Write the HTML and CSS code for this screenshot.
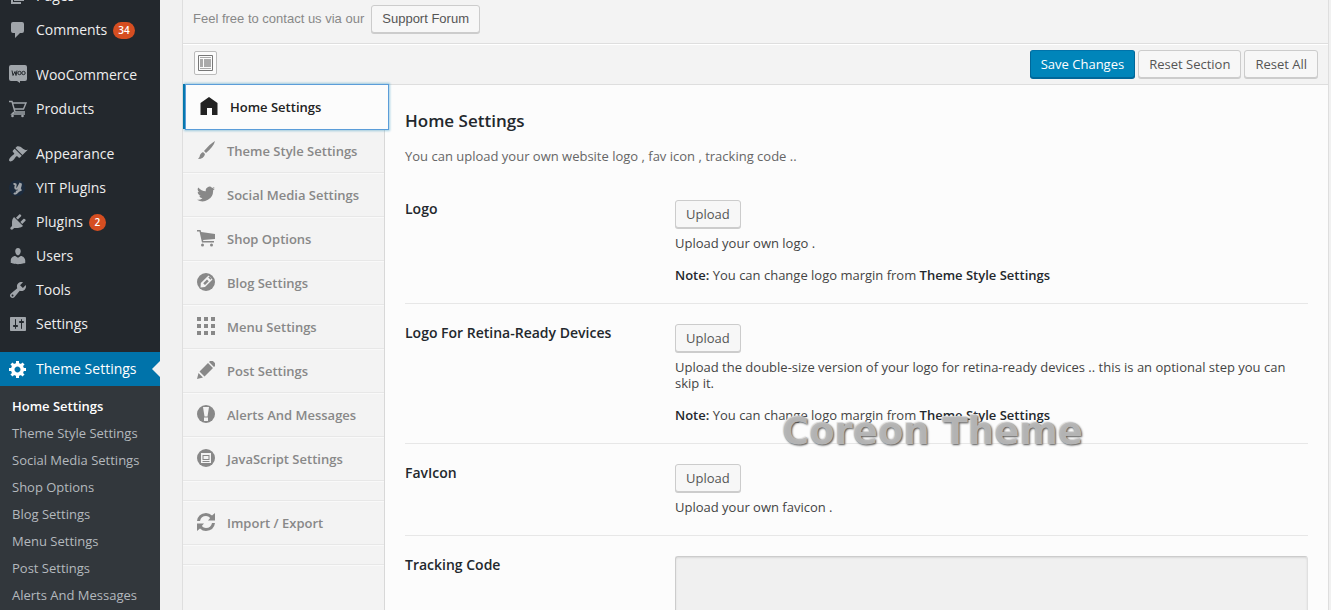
FILE: index.html
```html
<!DOCTYPE html>
<html lang="en">
<head>
<meta charset="utf-8">
<title>Theme Settings</title>
<link rel="stylesheet" href="styles.css">
</head>
<body>
<div class="admin">
  <nav class="menu" aria-label="Admin menu">
    <ul class="menu-list">
      <li><a href="#" class="menu-item"><svg class="ico" viewBox="0 0 20 20"><path d="M6 15V2h10v13zM5 16h8v2H3V5h2z"/></svg>Pages</a></li>
      <li class="gap-after"><a href="#" class="menu-item"><svg class="ico" viewBox="0 0 20 20"><path d="M5 2h9q2 0 2 2v7q0 2-2 2h-2l-5 5v-5H5q-2 0-2-2V4q0-2 2-2z"/></svg>Comments <span class="count">34</span></a></li>
      <li><a href="#" class="menu-item"><svg class="ico" viewBox="0 0 20 20"><path d="M3 0h14q2 0 2 2v12q0 2-2 2h-5v2l-3-2H3q-2 0-2-2V2q0-2 2-2z"/><path class="cut-line" d="M4 5.500l1 5 2-4 1 4 1-5"/><circle class="cut-line" cx="11.500" cy="8" r="1.700"/><circle class="cut-line" cx="15.500" cy="8" r="1.700"/></svg>WooCommerce</a></li>
      <li class="gap-after"><a href="#" class="menu-item"><svg class="ico" viewBox="0 0 20 20"><path class="line" d="M1 2.500h3l3 10.500h10M4.500 4H18l-2.500 6H6.500M6 13l-2 2h13"/><circle cx="4.500" cy="17" r="1.300"/><circle cx="14.500" cy="17" r="1.300"/></svg>Products</a></li>
      <li><a href="#" class="menu-item"><svg class="ico" viewBox="0 0 20 20"><path d="M14.480 11.060L7.410 3.990l1.500-1.500c.5-.56 2.300-.47 3.510.32 1.210.8 1.430 1.280 2.910 2.100 1.180.64 2.450 1.260 4.450.85zm-.71.710L6.700 4.700 4.930 6.470c-.39.390-.39 1.020 0 1.410l1.060 1.060c.39.390.39 1.030 0 1.420-.6.600-1.430 1.110-2.210 1.690-.35.260-.7.530-1.010.840C1.430 14.230.4 16.080 1.400 17.070c.99 1 2.840-.030 4.180-1.360.31-.31.580-.66.850-1.020.57-.78 1.080-1.610 1.690-2.210.39-.39 1.020-.39 1.410 0l1.060 1.060c.39.390 1.020.39 1.410 0z"/></svg>Appearance</a></li>
      <li><a href="#" class="menu-item"><svg class="ico" viewBox="0 0 20 20"><circle class="yit" cx="9" cy="10" r="8"/><path class="line bold" d="M5.500 6q3-.5 2 2-1 3.500 2 2.500l3-5.500M13 5.500q-.5 5.500-3.500 8.500-2 2.500-3.500 1M8 14l5.500-2.500"/></svg>YIT Plugins</a></li>
      <li><a href="#" class="menu-item"><svg class="ico" viewBox="0 0 20 20"><path d="M13.110 4.360L9.870 7.600 8 5.730l3.240-3.240c.35-.34 1.050-.2 1.560.32.520.51.660 1.210.31 1.550zm-8 1.770l.91-1.120 9.010 9.010-1.190.84c-.71.710-2.630 1.160-3.820 1.160H6.140L4.900 17.260c-.59.590-1.540.59-2.120 0-.59-.58-.59-1.530 0-2.120l1.240-1.240v-3.880c0-1.130.4-3.190 1.090-3.890zm7.260 3.970l3.240-3.240c.34-.35 1.040-.21 1.550.31.520.51.660 1.210.31 1.550l-3.240 3.250z"/></svg>Plugins <span class="count">2</span></a></li>
      <li><a href="#" class="menu-item"><svg class="ico" viewBox="0 0 20 20"><path d="M10 9.250c-2.270 0-2.730-3.440-2.730-3.440C7 4.020 7.820 2 9.970 2c2.160 0 2.980 2.020 2.710 3.810 0 0-.41 3.440-2.680 3.440zm0 2.570L12.720 10c2.390 0 4.520 2.330 4.520 4.530v2.490s-3.650 1.130-7.240 1.130c-3.650 0-7.240-1.130-7.240-1.130v-2.490c0-2.250 1.940-4.480 4.470-4.480z"/></svg>Users</a></li>
      <li><a href="#" class="menu-item"><svg class="ico" viewBox="0 0 20 20"><path d="M16.680 9.770c-1.340 1.340-3.300 1.670-4.950.99l-5.410 6.520c-.99.990-2.590.99-3.580 0s-.99-2.590 0-3.570l6.520-5.420c-.68-1.650-.35-3.610.99-4.950 1.280-1.280 3.120-1.620 4.720-1.060l-2.890 2.890 2.820 2.820 2.860-2.870c.53 1.580.18 3.390-1.080 4.650zM3.810 16.210c.4.390 1.040.39 1.430 0 .4-.4.4-1.040 0-1.430-.39-.4-1.030-.4-1.430 0-.39.390-.39 1.030 0 1.430z"/></svg>Tools</a></li>
      <li class="gap-after"><a href="#" class="menu-item"><svg class="ico" viewBox="0 0 20 20"><path d="M18 16V4c0-.55-.45-1-1-1H3c-.55 0-1 .45-1 1v12c0 .55.45 1 1 1h14c.55 0 1-.45 1-1zM8 11h1c.55 0 1 .45 1 1s-.45 1-1 1H8v1.500c0 .28-.22.500-.5.500s-.5-.22-.5-.5V13H6c-.55 0-1-.45-1-1s.45-1 1-1h1V5.500c0-.28.22-.5.500-.5s.5.220.5.500V11zm5-2h-1c-.55 0-1-.45-1-1s.45-1 1-1h1V5.500c0-.28.22-.5.500-.5s.5.220.5.500V7h1c.55 0 1 .45 1 1s-.45 1-1 1h-1v5.500c0 .28-.22.500-.5.500s-.5-.22-.5-.5V9z"/></svg>Settings</a></li>
      <li><a href="#" class="menu-item current" aria-current="true"><svg class="ico" viewBox="0 0 20 20"><path fill-rule="evenodd" d="M18 12h-2.180c-.17.700-.44 1.350-.81 1.930l1.540 1.540-2.100 2.100-1.540-1.540c-.58.360-1.230.63-1.910.790V19H8v-2.180c-.68-.16-1.330-.43-1.910-.79l-1.540 1.540-2.120-2.120 1.540-1.540c-.36-.58-.63-1.230-.79-1.910H1V9.030h2.170c.16-.7.440-1.350.8-1.940L2.430 5.550l2.100-2.100 1.540 1.540c.58-.37 1.240-.64 1.930-.81V2h3v2.180c.68.160 1.330.43 1.910.79l1.540-1.540 2.120 2.120-1.540 1.540c.36.590.64 1.240.8 1.940H18zm-8.500 1.500c1.660 0 3-1.340 3-3s-1.340-3-3-3-3 1.340-3 3 1.340 3 3 3z"/></svg>Theme Settings</a></li>
    </ul>
    <ul class="submenu">
      <li><a href="#" class="sub-item sub-current">Home Settings</a></li>
      <li><a href="#" class="sub-item">Theme Style Settings</a></li>
      <li><a href="#" class="sub-item">Social Media Settings</a></li>
      <li><a href="#" class="sub-item">Shop Options</a></li>
      <li><a href="#" class="sub-item">Blog Settings</a></li>
      <li><a href="#" class="sub-item">Menu Settings</a></li>
      <li><a href="#" class="sub-item">Post Settings</a></li>
      <li><a href="#" class="sub-item">Alerts And Messages</a></li>
    </ul>
  </nav>

  <main class="panel">
    <div class="intro">Feel free to contact us via our <button type="button" class="btn intro-btn">Support Forum</button></div>
    <div class="toolbar">
      <button type="button" class="expand" aria-label="Expand options"><svg viewBox="0 0 15 16"><path class="frame" d="M.5.500h14v15H.5z"/><path d="M2 2h11v1H2zM2 4h3v8H2zM6 4h7v8H6zM2 13h11v1H2z"/></svg></button>
      <div class="actions">
        <button type="button" class="btn primary">Save Changes</button>
        <button type="button" class="btn">Reset Section</button>
        <button type="button" class="btn">Reset All</button>
      </div>
    </div>
    <div class="body">
      <nav class="tabs" aria-label="Sections">
        <ul>
          <li class="tab-active"><a href="#" class="tab"><svg class="tab-ico" viewBox="0 0 18 18"><path d="M9 0l8.500 6v12H12v-7H7v7H.500V6z"/></svg>Home Settings</a></li>
          <li class="tab-row"><a href="#" class="tab"><svg class="tab-ico" viewBox="0 0 18 18"><path d="M18 0q-1 5-9 12l-2-2Q14 2 18 0zM6 11l2 2q-1 5-7 5Q3 16 3 14q1-2 3-3z"/></svg>Theme Style Settings</a></li>
          <li class="tab-row"><a href="#" class="tab"><svg class="tab-ico" viewBox="0 0 24 24"><path d="M24 4.600a10 10 0 0 1-2.800.8 5 5 0 0 0 2.100-2.700 10 10 0 0 1-3.100 1.200 4.900 4.900 0 0 0-8.400 4.500A14 14 0 0 1 1.700 3.200a4.900 4.900 0 0 0 1.500 6.500 5 5 0 0 1-2.200-.6 4.900 4.900 0 0 0 3.900 4.900 5 5 0 0 1-2.200.1 4.900 4.900 0 0 0 4.600 3.400A9.900 9.900 0 0 1 0 19.500a14 14 0 0 0 21.500-12.400A10 10 0 0 0 24 4.600z"/></svg>Social Media Settings</a></li>
          <li class="tab-row"><a href="#" class="tab"><svg class="tab-ico" viewBox="0 0 18 18"><path d="M0 1h3.500l.7 2L18 5v5L6 11l.3 1H17v1.500H5L2.500 2.500H0z"/><circle cx="5.500" cy="16" r="1.500"/><circle cx="14.500" cy="16" r="1.500"/></svg>Shop Options</a></li>
          <li class="tab-row"><a href="#" class="tab"><svg class="tab-ico" viewBox="0 0 18 18"><circle cx="9" cy="9" r="9"/><path class="hole" d="M3.500 14.500l.3-4.500L11.500 2.500l4 4-7.500 7.500z"/><path d="M6.200 10.200L10 6.400l1.800 1.800L8 12zM11.300 4.500l1-1 2.200 2.200-1 1z"/></svg>Blog Settings</a></li>
          <li class="tab-row"><a href="#" class="tab"><svg class="tab-ico" viewBox="0 0 18 18"><path d="M0 0h4v4H0zM7 0h4v4H7zM14 0h4v4h-4zM0 7h4v4H0zM7 7h4v4H7zM14 7h4v4h-4zM0 14h4v4H0zM7 14h4v4H7zM14 14h4v4h-4z"/></svg>Menu Settings</a></li>
          <li class="tab-row"><a href="#" class="tab"><svg class="tab-ico" viewBox="0 0 18 18"><path d="M12 1l1-1q2-1 4 1t1 4l-1 1zM11 2l5 5-8.500 8.500-5-5zM1.500 12L6 16.500 0 18z"/></svg>Post Settings</a></li>
          <li class="tab-row"><a href="#" class="tab"><svg class="tab-ico" viewBox="0 0 18 18"><circle cx="9" cy="9" r="9"/><path class="hole" d="M6 2h6l-1.500 9.500h-3zM7 12.500h4V16H7z"/></svg>Alerts And Messages</a></li>
          <li class="tab-row"><a href="#" class="tab"><svg class="tab-ico" viewBox="0 0 18 18"><circle cx="9" cy="9" r="9"/><path class="hole" d="M4 4h10v10H4z"/><path d="M5.500 6h7v5h-7z"/><path class="hole" d="M6.500 7h5v3h-5z"/><path d="M5.500 12h7v1h-7z"/></svg>JavaScript Settings</a></li>
          <li class="divider"></li>
          <li class="tab-row"><a href="#" class="tab"><svg class="tab-ico" viewBox="0 0 18 18"><path d="M0 8q1-7.500 9-8 3.500 0 6 2.500L18 0v7.500h-7L13.200 5Q11.500 3 9 3 4 3 3 8zM18 10q-1 7.500-9 8-3.500 0-6-2.500L0 18v-7.500h7L4.800 13Q6.500 15 9 15q5 0 6-5z"/></svg>Import / Export</a></li>
          <li class="divider"></li>
        </ul>
      </nav>
      <form class="content">
        <h1 class="title">Home Settings</h1>
        <p class="lead">You can upload your own website logo , fav icon , tracking code ..</p>
        <div class="field">
          <label class="field-label" for="logo">Logo</label>
          <div class="control">
            <button type="button" id="logo" class="btn">Upload</button>
            <p>Upload your own logo .</p>
            <p class="note"><b>Note:</b> You can change logo margin from <b>Theme Style Settings</b></p>
          </div>
        </div>
        <div class="field">
          <label class="field-label" for="retina">Logo For Retina-Ready Devices</label>
          <div class="control">
            <button type="button" id="retina" class="btn">Upload</button>
            <p>Upload the double-size version of your logo for retina-ready devices .. this is an optional step you can skip it.</p>
            <p class="note"><b>Note:</b> You can change logo margin from <b>Theme Style Settings</b></p>
          </div>
        </div>
        <div class="field">
          <label class="field-label" for="favicon">FavIcon</label>
          <div class="control">
            <button type="button" id="favicon" class="btn">Upload</button>
            <p>Upload your own favicon .</p>
          </div>
        </div>
        <div class="field">
          <label class="field-label" for="tracking">Tracking Code</label>
          <div class="control"><textarea id="tracking" class="code" rows="6"></textarea></div>
        </div>
      </form>
    </div>
  </main>
</div>
<div class="watermark">Coreon Theme</div>
</body>
</html>
```
FILE: styles.css
```css
* { box-sizing: border-box; }
html, body { height: 100%; }
body {
  margin: 0;
  overflow: hidden;
  background: #f1f1f1;
  color: #444;
  font: 13px/16px "Open Sans", sans-serif;
}
ul { margin: 0; padding: 0; list-style: none; }
p { margin: 0; }
a { text-decoration: none; color: inherit; }
svg { display: block; }

.admin { display: flex; min-height: 100%; }

/* Admin menu */
.menu { flex: none; width: 160px; background: #23282d; }
.menu-list { margin-top: -21px; }
.gap-after { padding-bottom: 11px; }
.menu-item {
  display: flex;
  align-items: center;
  height: 34px;
  padding-left: 8px;
  color: #eee;
  font-size: 14px;
}
.ico { width: 20px; height: 20px; margin-right: 8px; fill: #a0a5aa; }
.line { fill: none; stroke: #a0a5aa; stroke-width: 1.4; }
.bold { stroke-width: 2; }
.cut-line { fill: none; stroke: #23282d; stroke-width: 1; }
.yit { fill: #1c2b3d; }
.count {
  min-width: 17px;
  margin-left: 6px;
  padding: 0 5px;
  border-radius: 10px;
  background: #d54e21;
  color: #fff;
  font-size: 10px;
  font-weight: 600;
  line-height: 17px;
  text-align: center;
}
.current { position: relative; background: #0073aa; color: #fff; }
.current .ico { fill: #fff; }
.current::after {
  content: "";
  position: absolute;
  right: 0;
  top: 9px;
  border: 8px solid transparent;
  border-left: 0;
  border-right-color: #f1f1f1;
}
.submenu { min-height: 236px; padding-top: 7px; background: #32373c; }
.sub-item {
  display: block;
  padding-left: 12px;
  color: #b4b9be;
  line-height: 27px;
}
.sub-current { color: #fff; font-weight: 600; }

/* Options panel */
.panel {
  flex: 1;
  min-width: 0;
  display: flex;
  flex-direction: column;
  margin: 0 2px 0 22px;
  border: solid #dedede;
  border-width: 0 1px;
  background: #f3f3f3;
}
.btn {
  height: 28px;
  padding: 0 10px;
  border: 1px solid #ccc;
  border-radius: 3px;
  background: #f7f7f7;
  box-shadow: 0 1px 0 #ccc;
  color: #555;
  font: 13px/26px "Open Sans", sans-serif;
}
.primary {
  border-color: #0073aa #006799 #006799;
  background: #0085ba;
  box-shadow: 0 1px 0 #006799;
  color: #fff;
}
.intro {
  display: flex;
  gap: 7px;
  height: 44px;
  padding: 5px 10px 0;
  border-bottom: 1px solid #dedede;
  color: #888;
  font: 13px/28px "Liberation Sans", Arial, sans-serif;
}
.intro-btn { font-family: "Liberation Sans", Arial, sans-serif; }
.toolbar {
  display: flex;
  justify-content: space-between;
  height: 41px;
  padding: 5px 10px 0 11px;
  border-top: 1px solid #fff;
  border-bottom: 1px solid #dedede;
}
.actions { display: flex; gap: 3px; }
.expand {
  width: 23px;
  height: 24px;
  margin-top: 1px;
  padding: 3px;
  border: 1px solid #bbb;
  border-radius: 2px;
  background: #fbfbfb;
}
.expand svg { width: 15px; height: 16px; fill: #aaa; }
.expand .frame { fill: none; stroke: #777; }
.body { flex: 1; display: flex; }

.tabs { flex: none; width: 202px; border-right: 1px solid #d8d8d8; }
.tab {
  display: flex;
  align-items: center;
  gap: 12px;
  height: 43px;
  padding-left: 14px;
  color: #888;
  font-weight: 600;
}
.tab-ico { width: 18px; height: 18px; margin-bottom: 2px; fill: #888; }
.hole { fill: #f3f3f3; }
.tab-row { height: 44px; border-bottom: 1px solid #e7e7e7; box-shadow: 0 1px 0 #f9f9f9; }
.tab-active { height: 45px; border-left: 2px solid #0073aa; }
.tab-active .tab {
  position: relative;
  width: 204px;
  height: 46px;
  margin-top: -1px;
  padding-left: 14px;
  border: 1px solid #5b9dd9;
  background: #fcfcfc;
  box-shadow: 0 0 2px 1px rgba(30, 140, 190, .4);
  color: #222;
}
.tab-active .tab-ico { fill: #222; }
.divider { height: 20px; border-bottom: 1px solid #e7e7e7; box-shadow: 0 1px 0 #f9f9f9; }

.content { flex: 1; min-width: 0; padding: 24px 20px 0; background: #fcfcfc; }
.title {
  margin: 0;
  color: #23282d;
  font-size: 17px;
  font-weight: 600;
  line-height: 24px;
}
.lead { margin: 15px 0 16px; color: #666; }
.field {
  display: grid;
  grid-template-columns: 270px 1fr;
  padding: 20px 0;
  border-bottom: 1px solid #e7e7e7;
}
.field-label { color: #23282d; font-size: 14px; font-weight: 600; line-height: 18px; }
.control .btn { display: block; margin-bottom: 7px; }
.note { margin-top: 16px; }
.control b { color: #23282d; font-weight: 600; }
.code {
  display: block;
  width: 100%;
  height: 120px;
  border: 1px solid #ccc;
  border-right-color: #e0e0e0;
  border-radius: 3px;
  background: #f0f0f0;
  box-shadow: inset 0 1px 2px rgba(0, 0, 0, .1);
  resize: none;
}

.watermark {
  position: absolute;
  left: 782px;
  top: 411px;
  color: rgba(186, 186, 186, .95);
  font: bold 37px/42px "DejaVu Sans", sans-serif;
  text-shadow: 1px 1px 2px #555, -1px -1px 1px #ddd;
  pointer-events: none;
}
```
